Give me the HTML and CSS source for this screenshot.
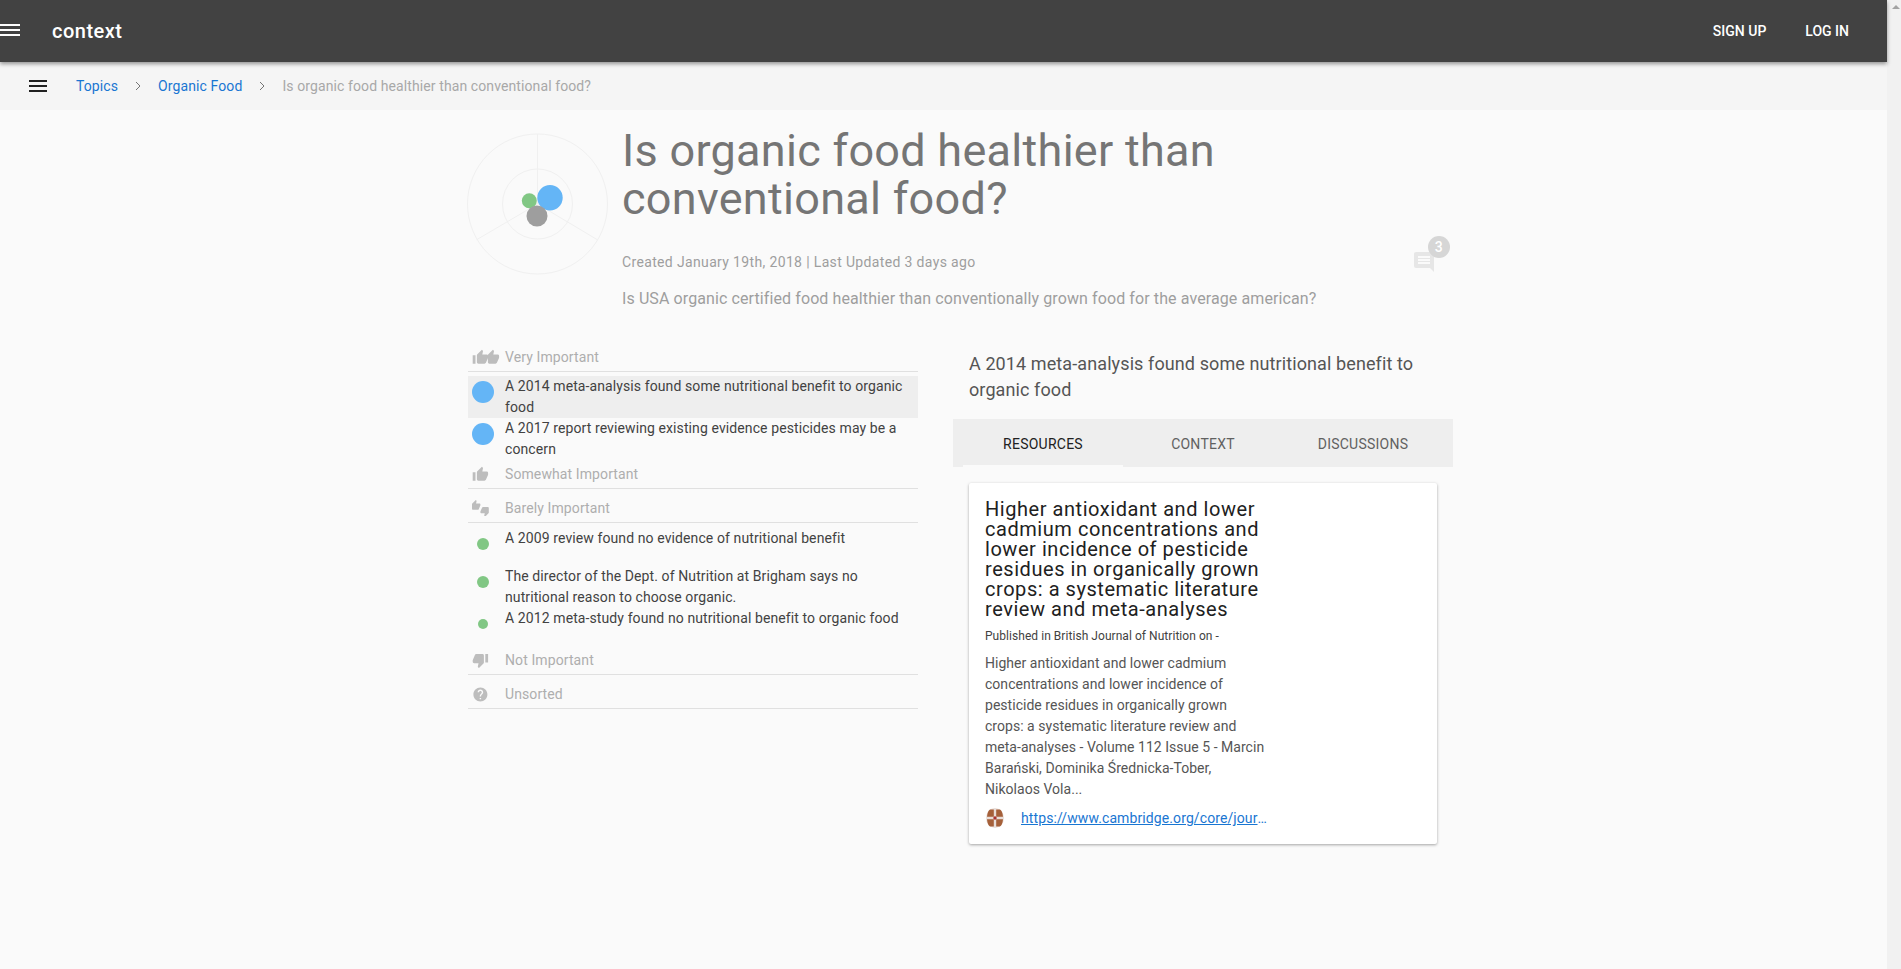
FILE: index.html
```html
<!DOCTYPE html>
<html lang="en">
<head>
    <meta charset="UTF-8">
    <meta name="viewport" content="width=device-width, initial-scale=1.0">
    <title>context - Is organic food healthier than conventional food?</title>
    <link rel="stylesheet" href="styles.css">
</head>
<body>
    <div class="page">
        <header class="appbar">
            <svg class="appbar-menu" viewBox="0 0 20 14"><path d="M0 1h20v2H0zM0 6h20v2H0zM0 11h20v2H0z"/></svg>
            <span class="brand">context</span>
            <a class="appbar-link signup">SIGN UP</a>
            <a class="appbar-link">LOG IN</a>
        </header>

        <nav class="crumbs">
            <svg class="crumbs-menu" viewBox="0 0 18 12"><path d="M0 0h18v2H0zM0 5h18v2H0zM0 10h18v2H0z"/></svg>
            <a class="crumb">Topics</a>
            <span class="crumb-sep"><svg viewBox="0 0 6 10"><path d="M1 1l4 4-4 4"/></svg></span>
            <a class="crumb">Organic Food</a>
            <span class="crumb-sep"><svg viewBox="0 0 6 10"><path d="M1 1l4 4-4 4"/></svg></span>
            <span class="crumb-current">Is organic food healthier than conventional food?</span>
        </nav>

        <main class="content">
            <section class="question">
                <svg class="radar" viewBox="0 0 142 142">
                    <g fill="none" stroke="#f0f0f0" stroke-width="1">
                        <circle cx="70.500" cy="71" r="70"/>
                        <circle cx="70.500" cy="71" r="35"/>
                        <path d="M70.500 71V1M70.500 71L9.700 106.700M70.500 71L130.300 106.700"/>
                    </g>
                    <circle cx="83" cy="64.700" r="12.700" fill="#64b5f6"/>
                    <circle cx="62.300" cy="67.700" r="7.500" fill="#81c784"/>
                    <circle cx="70" cy="83" r="10.500" fill="#9e9e9e"/>
                </svg>
                <div class="question-body">
                    <h1>Is organic food healthier than conventional food?</h1>
                    <div class="question-meta">
                        <span>Created January 19th, 2018 | Last Updated 3 days ago</span>
                        <span class="comments">
                            <svg viewBox="0 0 24 24"><path d="M21.990 4c0-1.100-.890-2-1.990-2H4c-1.100 0-2 .900-2 2v12c0 1.100.900 2 2 2h14l4 4-.010-18zM18 14H6v-2h12v2zm0-3H6V9h12v2zm0-3H6V6h12v2z"/></svg>
                            <b class="comments-count">3</b>
                        </span>
                    </div>
                    <p class="question-desc">Is USA organic certified food healthier than conventionally grown food for the average american?</p>
                </div>
            </section>

            <div class="columns">
                <section class="claims">
                    <h3 class="group">
                        <svg class="group-icon" viewBox="0 0 30 16">
                            <g transform="scale(.7)"><path d="M1 21h4V9H1v12zm22-11c0-1.100-.900-2-2-2h-6.310l.950-4.570.030-.320c0-.410-.170-.790-.440-1.060L14.170 1 7.590 7.590C7.220 7.950 7 8.450 7 9v10c0 1.100.900 2 2 2h9c.830 0 1.540-.500 1.840-1.220l3.020-7.050c.090-.230.140-.470.140-.730v-2z"/></g>
                            <g transform="translate(11) scale(.7)"><path d="M23 10c0-1.100-.900-2-2-2h-6.310l.950-4.570.030-.320c0-.410-.170-.790-.440-1.060L14.170 1 7.590 7.590C7.220 7.950 7 8.450 7 9v10c0 1.100.900 2 2 2h9c.830 0 1.540-.500 1.840-1.220l3.020-7.050c.090-.230.140-.470.140-.730v-2z"/></g>
                        </svg>
                        Very Important
                    </h3>
                    <div class="claim active"><span class="dot-box"><i class="dot dot-blue"></i></span><p>A 2014 meta-analysis found some nutritional benefit to organic food</p></div>
                    <div class="claim"><span class="dot-box"><i class="dot dot-blue"></i></span><p>A 2017 report reviewing existing evidence pesticides may be a concern</p></div>

                    <h3 class="group">
                        <svg class="group-icon" viewBox="0 0 30 16"><g transform="scale(.7)"><path d="M1 21h4V9H1v12zm22-11c0-1.100-.900-2-2-2h-6.310l.950-4.570.030-.320c0-.410-.170-.790-.440-1.060L14.170 1 7.590 7.590C7.220 7.950 7 8.450 7 9v10c0 1.100.900 2 2 2h9c.830 0 1.540-.500 1.840-1.220l3.020-7.050c.090-.230.140-.470.140-.730v-2z"/></g></svg>
                        Somewhat Important
                    </h3>

                    <h3 class="group">
                        <svg class="group-icon" viewBox="0 0 30 16"><g transform="scale(.7)"><path d="M12 6c0-.550-.450-1-1-1H5.820l.660-3.180.020-.230c0-.310-.130-.590-.330-.800L5.380 0 .440 4.940C.170 5.210 0 5.590 0 6v6.500c0 .830.670 1.500 1.500 1.500h6.750c.620 0 1.150-.380 1.380-.910l2.260-5.290c.070-.170.110-.360.110-.550V6zm10.500 4h-6.750c-.620 0-1.150.380-1.380.910l-2.260 5.290c-.070.170-.110.360-.110.550V18c0 .550.450 1 1 1h5.180l-.660 3.180-.020.240c0 .310.130.590.330.800l.790.780 4.940-4.940c.270-.270.440-.650.440-1.060v-6.500c0-.830-.670-1.500-1.500-1.500z"/></g></svg>
                        Barely Important
                    </h3>
                    <div class="claim tall"><span class="dot-box"><i class="dot dot-green"></i></span><p>A 2009 review found no evidence of nutritional benefit</p></div>
                    <div class="claim"><span class="dot-box"><i class="dot dot-green"></i></span><p>The director of the Dept. of Nutrition at Brigham says no nutritional reason to choose organic.</p></div>
                    <div class="claim tall"><span class="dot-box"><i class="dot dot-green-sm"></i></span><p>A 2012 meta-study found no nutritional benefit to organic food</p></div>

                    <h3 class="group">
                        <svg class="group-icon" viewBox="0 0 30 16"><g transform="scale(.7)"><path d="M15 3H6c-.830 0-1.540.500-1.840 1.220l-3.020 7.050c-.090.230-.140.470-.140.730v2c0 1.100.900 2 2 2h6.310l-.950 4.570-.030.320c0 .410.170.790.440 1.060L9.830 23l6.590-6.590c.360-.360.580-.860.580-1.410V5c0-1.100-.900-2-2-2zm4 0v12h4V3h-4z"/></g></svg>
                        Not Important
                    </h3>
                    <h3 class="group">
                        <svg class="group-icon" viewBox="0 0 30 16"><g transform="scale(.7)"><path d="M12 2C6.480 2 2 6.480 2 12s4.480 10 10 10 10-4.480 10-10S17.520 2 12 2zm1 17h-2v-2h2v2zm2.070-7.750l-.900.920C13.450 12.900 13 13.500 13 15h-2v-.500c0-1.100.450-2.100 1.170-2.830l1.240-1.260c.370-.360.590-.860.590-1.410 0-1.100-.900-2-2-2s-2 .900-2 2H8c0-2.210 1.790-4 4-4s4 1.790 4 4c0 .880-.360 1.680-.930 2.250z"/></g></svg>
                        Unsorted
                    </h3>
                </section>

                <section class="detail">
                    <h2 class="detail-title">A 2014 meta-analysis found some nutritional benefit to organic food</h2>
                    <div class="tabs">
                        <a class="tab selected">RESOURCES</a>
                        <a class="tab">CONTEXT</a>
                        <a class="tab">DISCUSSIONS</a>
                    </div>
                    <article class="card">
                        <div class="card-main">
                            <h4>Higher antioxidant and lower cadmium concentrations and lower incidence of pesticide residues in organically grown crops: a systematic literature review and meta-analyses</h4>
                            <div class="card-source">Published in British Journal of Nutrition on -</div>
                            <p class="card-text">Higher antioxidant and lower cadmium concentrations and lower incidence of pesticide residues in organically grown crops: a systematic literature review and meta-analyses - Volume 112 Issue 5 - Marcin Barański, Dominika Średnicka-Tober, Nikolaos Vola...</p>
                            <div class="card-link">
                                <svg class="favicon" viewBox="0 0 18 20">
                                    <ellipse cx="9" cy="10" rx="9" ry="10" fill="#e8ddd8"/>
                                    <path d="M7.800 1.500H4Q1.500 3 1 8.800h6.800zM10.200 1.500H14q2.500 1.500 3 7.300h-6.800zM7.800 18.500H4Q1.500 17 1 11.200h6.800zM10.200 18.500H14q2.500-1.500 3-7.300h-6.800z" fill="#a5603a"/>
                                    <circle cx="9" cy="10" r="1.700" fill="#a83232"/>
                                </svg>
                                <a class="url">https://www.cambridge.org/core/journals/british-journal-of-nutrition/article/higher-antioxidant</a>
                            </div>
                        </div>
                    </article>
                </section>
            </div>
        </main>
    </div>

    <div class="scrollbar">
        <span class="arrow-up"></span>
    </div>
</body>
</html>
```

FILE: styles.css
```css
:root {
    --appbar: #424242;
    --page: #fafafa;
    --strip: #f5f5f5;
    --tab-bg: #eeeeee;
    --line: #e0e0e0;
    --muted: #9e9e9e;
    --link: #1976d2;
}

* {
    margin: 0;
    padding: 0;
    box-sizing: border-box;
}

html, body {
    height: 100%;
    overflow: hidden;
}

body {
    display: flex;
    background-color: var(--page);
    color: #424242;
    font-family: Roboto, "Liberation Sans", sans-serif;
    font-size: 14px;
    letter-spacing: 0.1px;
}

.page {
    flex: 1;
    min-width: 0;
}

.appbar {
    position: relative;
    z-index: 2;
    display: flex;
    align-items: center;
    height: 62px;
    padding-right: 38px;
    background-color: var(--appbar);
    color: #fff;
    box-shadow: 0 2px 4px rgba(0, 0, 0, 0.4);
}

.appbar-menu {
    width: 20px;
    height: 14px;
    margin-top: -2px;
    fill: #fff;
}

.brand {
    margin-left: 32px;
    margin-right: auto;
    font-size: 20px;
    font-weight: 500;
    letter-spacing: 0.5px;
}

.appbar-link {
    font-size: 14px;
    font-weight: 500;
    letter-spacing: 0;
}

.signup {
    margin-right: 39px;
}

.crumbs {
    display: flex;
    align-items: center;
    height: 48px;
    padding-left: 29px;
    background-color: var(--strip);
}

.crumbs-menu {
    width: 18px;
    height: 12px;
    margin-right: 29px;
    fill: #212121;
}

.crumb {
    color: var(--link);
}

.crumb-sep {
    display: flex;
    justify-content: center;
    width: 40px;
}

.crumb-sep svg {
    width: 6px;
    height: 10px;
    fill: none;
    stroke: #757575;
    stroke-width: 1;
}

.crumb-current {
    color: #a8a8a8;
}

.content {
    width: 986px;
    margin-left: 467px;
}

.question {
    display: flex;
    padding-top: 17px;
}

.radar {
    flex: none;
    width: 142px;
    height: 142px;
    margin-top: 6px;
}

.question-body {
    flex: 1;
    margin-left: 13px;
}

h1 {
    max-width: 640px;
    color: #757575;
    font-size: 45px;
    font-weight: 400;
    line-height: 48px;
    letter-spacing: 0.28px;
}

.question-meta {
    display: flex;
    justify-content: space-between;
    align-items: center;
    height: 24px;
    margin-top: 27px;
    padding-right: 17px;
    color: var(--muted);
    letter-spacing: 0.35px;
}

.comments {
    position: relative;
    display: block;
    width: 24px;
    height: 24px;
}

.comments svg {
    display: block;
    width: 24px;
    height: 24px;
    fill: #e6e6e6;
}

.comments-count {
    position: absolute;
    top: -14px;
    left: 16px;
    width: 22px;
    height: 22px;
    border-radius: 50%;
    background-color: #d6d6d6;
    color: #fff;
    font-size: 14px;
    font-weight: 500;
    line-height: 22px;
    text-align: center;
}

.question-desc {
    margin-top: 15px;
    color: var(--muted);
    font-size: 16px;
}

.columns {
    display: flex;
    margin-top: 35px;
}

.claims {
    flex: none;
    width: 450px;
    margin-left: 1px;
}

.group {
    display: flex;
    align-items: center;
    height: 29px;
    border-bottom: 1px solid var(--line);
    color: #aeaeae;
    font-size: 14px;
    font-weight: 400;
}

.group + .group {
    margin-top: 5px;
}

.group + .claim {
    margin-top: 4px;
}

.group + .claim.tall {
    margin-top: 5px;
}

.group-icon {
    flex: none;
    width: 30px;
    height: 16px;
    margin-left: 4px;
    margin-right: 3px;
    fill: #bdbdbd;
}

.claim {
    display: flex;
    align-items: flex-start;
    color: #424242;
    line-height: 21px;
}

.claim p {
    flex: 1;
    padding-right: 12px;
}

.claim.active {
    background-color: var(--tab-bg);
}

.claim.tall {
    min-height: 38px;
}

.dot-box {
    flex: none;
    display: flex;
    justify-content: center;
    align-items: center;
    width: 37px;
    height: 32px;
    padding-right: 7px;
}

.dot {
    display: block;
    border-radius: 50%;
}

.dot-blue {
    width: 22px;
    height: 22px;
    background-color: #64b5f6;
}

.dot-green {
    width: 12px;
    height: 12px;
    background-color: #81c784;
}

.dot-green-sm {
    width: 10px;
    height: 10px;
    background-color: #81c784;
}

.detail {
    flex: none;
    width: 500px;
    margin-left: 35px;
}

.detail-title {
    padding: 0 16px;
    margin-top: 8px;
    color: #555;
    font-size: 18px;
    font-weight: 400;
    line-height: 26px;
}

.tabs {
    display: flex;
    height: 48px;
    margin-top: 16px;
    padding: 0 10px;
    background-color: var(--tab-bg);
}

.tab {
    flex: 1;
    height: 48px;
    padding-top: 17px;
    color: #616161;
    font-size: 14px;
    letter-spacing: 0.25px;
    text-align: center;
}

.tab.selected {
    color: #212121;
    border-bottom: 2px solid var(--page);
}

.card {
    margin: 16px 16px 0;
    padding: 16px;
    background-color: #fff;
    border-radius: 2px;
    box-shadow: 0 1px 3px rgba(0, 0, 0, 0.35);
}

.card-main {
    width: 282px;
}

h4 {
    color: #212121;
    font-size: 20px;
    font-weight: 400;
    line-height: 20px;
    letter-spacing: 0.55px;
}

.card-source {
    margin-top: 10px;
    color: #424242;
    font-size: 12px;
    letter-spacing: 0.05px;
}

.card-text {
    margin-top: 10px;
    color: #555;
    line-height: 21px;
    letter-spacing: 0.03px;
}

.card-link {
    display: flex;
    align-items: center;
    margin-top: 8px;
}

.favicon {
    flex: none;
    width: 18px;
    height: 20px;
    margin-left: 1px;
    margin-right: 17px;
}

.url {
    overflow: hidden;
    white-space: nowrap;
    text-overflow: ellipsis;
    color: var(--link);
    text-decoration: underline;
}

.scrollbar {
    flex: none;
    display: flex;
    flex-direction: column;
    align-items: center;
    width: 14px;
    padding: 5px 0 0 3px;
    background-color: #f1f1f1;
}

.arrow-up {
    border-left: 4px solid transparent;
    border-right: 4px solid transparent;
    border-bottom: 4px solid #a3a3a3;
}
```
